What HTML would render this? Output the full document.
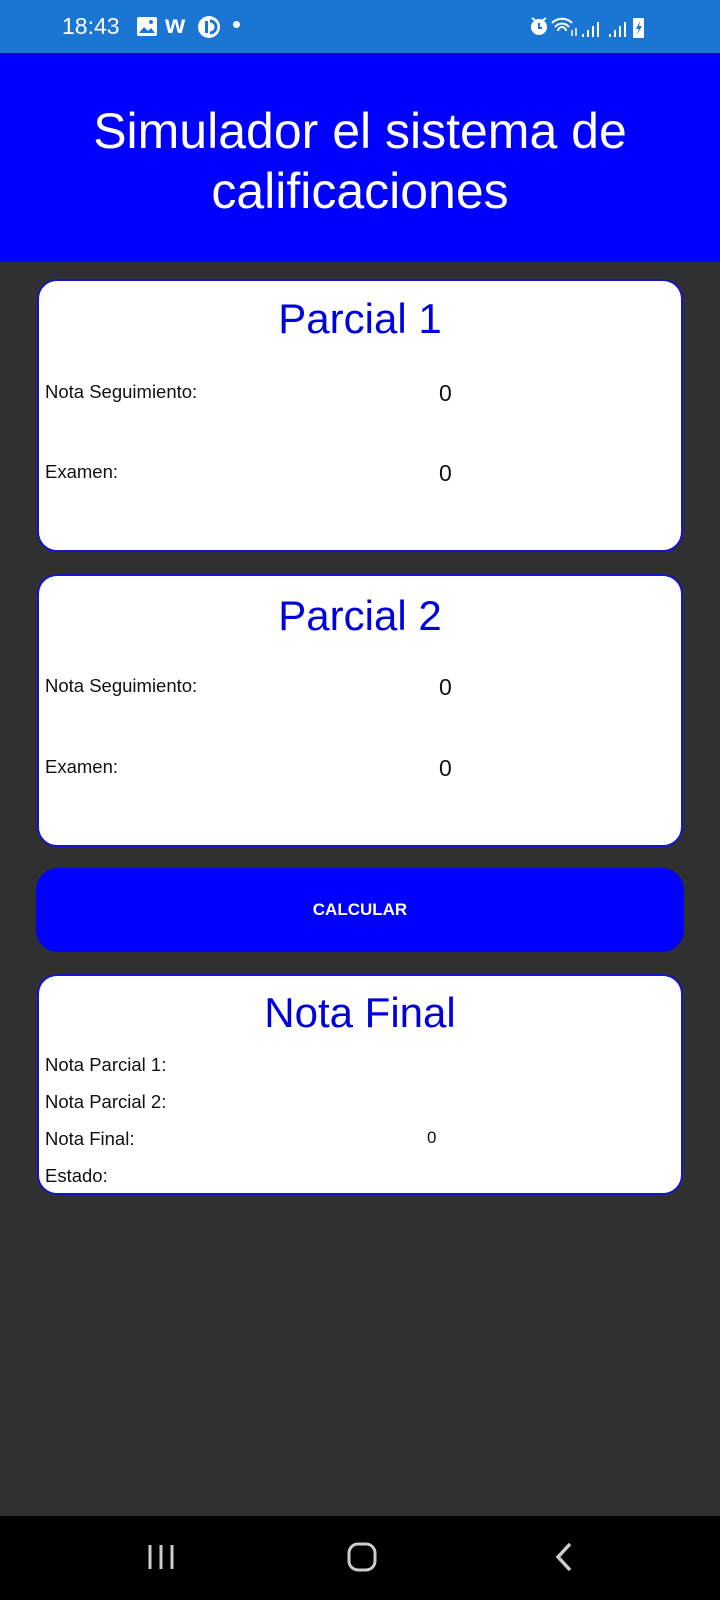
<!DOCTYPE html>
<html><head><meta charset="utf-8"><style>
*{margin:0;padding:0;box-sizing:border-box}
body{width:720px;height:1600px;background:#303030;font-family:"Liberation Sans",sans-serif;position:relative;overflow:hidden}
.abs{position:absolute}
.status{left:0;top:0;width:720px;height:53px;background:#1a76d2;color:#fff}
.header{left:0;top:53px;width:720px;height:209px;background:#0000ff;color:#fff;text-align:center;font-size:50px;line-height:60px;padding-top:48px}
.card{left:37px;width:646px;background:#fff;border:2px solid #1515c8;border-radius:20px}
.title{position:absolute;left:0;width:100%;text-align:center;color:#0000dd;font-size:42px;line-height:50px}
.lbl{position:absolute;left:6px;font-size:18.5px;color:#111;line-height:22px}
.val{position:absolute;font-size:23px;color:#111;line-height:28px}
.btn{left:36px;top:868px;width:648px;height:84px;background:#0000ff;border-radius:22px;color:#fff;text-align:center;font-size:17px;line-height:84px;font-weight:bold}
.nav{left:0;top:1516px;width:720px;height:84px;background:#000}
</style></head><body>
<div class="abs status">
 <div class="abs" style="left:62px;top:13px;font-size:23px">18:43</div>
 <svg class="abs" style="left:136px;top:16px" width="22" height="22" viewBox="0 0 22 22"><rect x="1" y="1" width="20" height="19" rx="2" fill="#fff"/><path d="M3 17l5-6 4 4 3-3 4 5z" fill="#1a76d2"/><circle cx="15" cy="6" r="2" fill="#1a76d2"/></svg>
 <div class="abs" style="left:165px;top:9px;font-size:26px;font-weight:bold">w</div>
 <svg class="abs" style="left:197px;top:15px" width="24" height="24"><circle cx="12" cy="12" r="11" fill="#fff"/><rect x="8" y="6" width="3" height="12" fill="#1a76d2"/><path d="M13 6a6 6 0 0 1 0 12" stroke="#1a76d2" stroke-width="3" fill="none"/></svg>
 <div class="abs" style="left:233px;top:21px;width:7px;height:7px;border-radius:50%;background:#fff"></div>
 <svg class="abs" style="left:528px;top:14px" width="124" height="26"><circle cx="11" cy="13" r="8" fill="#fff"/><path d="M4 4l4 3M18 4l-4 3" stroke="#fff" stroke-width="2"/><path d="M11 9v5h3" stroke="#1a76d2" stroke-width="2" fill="none"/><path d="M24 9a14 14 0 0 1 20 0M27 13a9 9 0 0 1 14 0M30 17a4 4 0 0 1 8 0" stroke="#fff" stroke-width="2" fill="none"/><path d="M44 16v6M48 14v8" stroke="#fff" stroke-width="1.5"/><path d="M55 20v3M60 16v7M65 12v11M70 8v15" stroke="#fff" stroke-width="2"/><path d="M82 20v3M87 16v7M92 12v11M97 8v15" stroke="#fff" stroke-width="2"/><rect x="105" y="4" width="11" height="20" rx="1" fill="#fff"/><path d="M112 7l-4 8h3l-2 6 5-9h-3z" fill="#1a76d2"/></svg>
</div>
<div class="abs header">Simulador el sistema de<br>calificaciones</div>

<div class="abs card" style="top:279px;height:273px">
 <div class="title" style="top:13px">Parcial 1</div>
 <div class="lbl" style="top:100px">Nota Seguimiento:</div>
 <div class="val" style="left:400px;top:98px">0</div>
 <div class="lbl" style="top:180px">Examen:</div>
 <div class="val" style="left:400px;top:178px">0</div>
</div>
<div class="abs card" style="top:574px;height:273px">
 <div class="title" style="top:15px">Parcial 2</div>
 <div class="lbl" style="top:99px">Nota Seguimiento:</div>
 <div class="val" style="left:400px;top:97px">0</div>
 <div class="lbl" style="top:180px">Examen:</div>
 <div class="val" style="left:400px;top:178px">0</div>
</div>
<div class="abs btn">CALCULAR</div>
<div class="abs card" style="top:974px;height:221px">
 <div class="title" style="top:12px">Nota Final</div>
 <div class="lbl" style="top:78px">Nota Parcial 1:</div>
 <div class="lbl" style="top:115px">Nota Parcial 2:</div>
 <div class="lbl" style="top:152px">Nota Final:</div>
 <div class="val" style="left:388px;top:151px;font-size:17px;line-height:22px">0</div>
 <div class="lbl" style="top:189px">Estado:</div>
</div>
<div class="abs nav">
 <svg class="abs" style="left:146px;top:26px" width="30" height="30"><path d="M4 3v24M15 3v24M26 3v24" stroke="#ccc" stroke-width="3"/></svg>
 <svg class="abs" style="left:346px;top:25px" width="32" height="32"><rect x="3" y="3" width="26" height="26" rx="9" stroke="#ccc" stroke-width="3" fill="none"/></svg>
 <svg class="abs" style="left:552px;top:25px" width="24" height="32"><path d="M18 3L6 16l12 13" stroke="#ccc" stroke-width="3.5" fill="none"/></svg>
</div>
</body></html>
